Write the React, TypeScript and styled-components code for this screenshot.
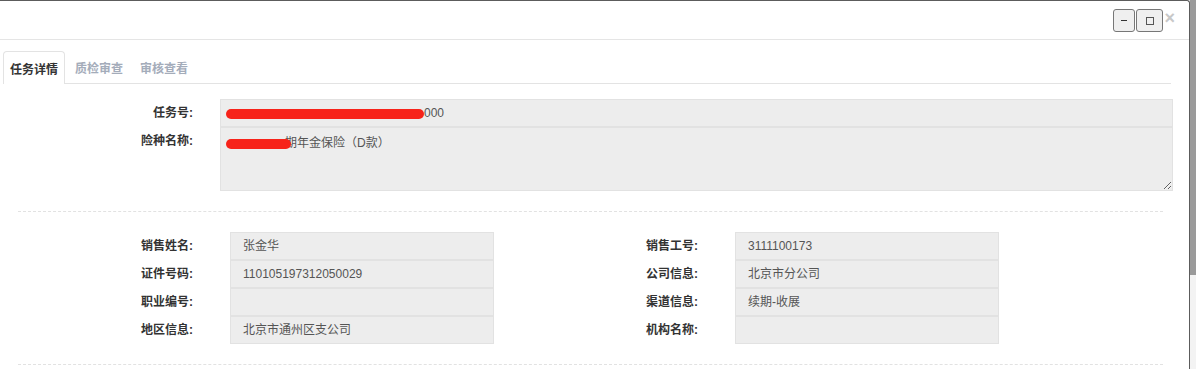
import React from 'react';
import styled, { createGlobalStyle } from 'styled-components';

const GlobalStyle = createGlobalStyle`
  html, body {
    margin: 0;
    padding: 0;
    background: #fff;
  }
  body {
    font-family: "Liberation Sans", "Noto Sans CJK SC", sans-serif;
    font-size: 12px;
    color: #333;
  }
`;

const Page = styled.div`
  display: flex;
  width: 1196px;
  height: 369px;
  overflow: hidden;
`;

const Dialog = styled.div`
  width: 1190px;
  height: 369px;
  background: #fff;
  border-top: 1px solid #5c5c5c;
  border-right: 1px solid #5c5c5c;
  border-top-right-radius: 3px;
  box-sizing: border-box;
  display: flex;
  flex-direction: column;
`;

const Backdrop = styled.div`
  flex: 1;
  background: linear-gradient(#9a9a9a 0, #9a9a9a 275px, #f3f3f3 275px);
`;

const TitleBar = styled.div`
  height: 39px;
  border-bottom: 1px solid #e5e5e5;
  display: flex;
  align-items: flex-start;
  justify-content: flex-end;
  padding: 8px 14px 0 0;
  box-sizing: border-box;
  flex-shrink: 0;
`;

const WinButton = styled.button<{ $wide?: boolean }>`
  width: ${({ $wide }) => ($wide ? '27px' : '22px')};
  height: 23px;
  margin: 0 1px 0 0;
  padding: 0;
  border: 1px solid #777;
  border-radius: 3px;
  background: #efefef;
  display: flex;
  align-items: center;
  justify-content: center;
`;

const MinGlyph = styled.span`
  width: 6px;
  height: 1px;
  background: #333;
`;

const MaxGlyph = styled.span`
  width: 8px;
  height: 8px;
  border: 1px solid #555;
  box-sizing: border-box;
`;

const CloseGlyph = styled.span`
  margin-left: 0;
  color: #c8c8c8;
  font-size: 18px;
  font-weight: 700;
  line-height: 18px;
`;

const TabBar = styled.div`
  display: flex;
  margin: 11px 18px 0 3px;
  border-bottom: 1px solid #e3e3e3;
  height: 32px;
`;

const Tab = styled.div<{ $active?: boolean }>`
  padding: 0 6px;
  margin-right: 3px;
  height: ${({ $active }) => ($active ? '33px' : '32px')};
  box-sizing: border-box;
  display: flex;
  align-items: center;
  font-weight: 700;
  font-size: 12px;
  color: ${({ $active }) => ($active ? '#333' : '#a4acba')};
  background: #fff;
  border: 1px solid ${({ $active }) => ($active ? '#e3e3e3' : 'transparent')};
  border-bottom: none;
  border-radius: 4px 4px 0 0;
`;

const Body = styled.div`
  padding: 15px 0 0 0;
`;

const TopForm = styled.div`
  display: grid;
  grid-template-columns: 220px 953px;
`;

const Label = styled.div<{ $pad: number }>`
  font-weight: 700;
  color: #333;
  text-align: right;
  padding-right: ${({ $pad }) => $pad}px;
  height: 28px;
  line-height: 28px;
`;

const Field = styled.div<{ $pad?: number }>`
  height: 28px;
  line-height: 26px;
  box-sizing: border-box;
  background: #ededed;
  border: 1px solid #e2e2e2;
  color: #555;
  padding-left: ${({ $pad }) => $pad ?? 12}px;
  white-space: nowrap;
  overflow: hidden;
`;

const TextArea = styled.div`
  height: 64px;
  box-sizing: border-box;
  background: #ededed;
  border: 1px solid #e2e2e2;
  color: #555;
  padding: 7px 5px;
  line-height: 16px;
  resize: vertical;
  overflow: hidden;
`;

const Redact = styled.span<{ $w: number; $overlap?: number }>`
  display: inline-block;
  position: relative;
  z-index: 1;
  width: ${({ $w }) => $w}px;
  height: 10px;
  margin-right: ${({ $overlap }) => -($overlap ?? 0)}px;
  border-radius: 5px;
  background: #f7231a;
  vertical-align: middle;
`;

const Divider = styled.div`
  margin: 20px 0 0 18px;
  width: 1145px;
  border-top: 1px dashed #e2e2e2;
`;

const InfoGrid = styled.div`
  display: grid;
  grid-template-columns: 230px 264px 241px 264px;
  margin-top: 20px;
`;

const rows: [string, string, string, string][] = [
  ['销售姓名:', '张金华', '销售工号:', '3111100173'],
  ['证件号码:', '110105197312050029', '公司信息:', '北京市分公司'],
  ['职业编号:', '', '渠道信息:', '续期-收展'],
  ['地区信息:', '北京市通州区支公司', '机构名称:', ''],
];

export default function App() {
  return (
    <>
      <GlobalStyle />
      <Page>
        <Dialog>
          <TitleBar>
            <WinButton>
              <MinGlyph />
            </WinButton>
            <WinButton $wide>
              <MaxGlyph />
            </WinButton>
            <CloseGlyph>×</CloseGlyph>
          </TitleBar>

          <TabBar>
            <Tab $active>任务详情</Tab>
            <Tab>质检审查</Tab>
            <Tab>审核查看</Tab>
          </TabBar>

          <Body>
            <TopForm>
              <Label $pad={27}>任务号:</Label>
              <Field $pad={5}>
                <Redact $w={198} />
                000
              </Field>
              <Label $pad={27}>险种名称:</Label>
              <TextArea>
                <Redact $w={65} $overlap={6} />
                期年金保险（D款）
              </TextArea>
            </TopForm>

            <Divider />

            <InfoGrid>
              {rows.map(([l1, v1, l2, v2]) => (
                <React.Fragment key={l1}>
                  <Label $pad={37}>{l1}</Label>
                  <Field>{v1}</Field>
                  <Label $pad={37}>{l2}</Label>
                  <Field>{v2}</Field>
                </React.Fragment>
              ))}
            </InfoGrid>

            <Divider />
          </Body>
        </Dialog>
        <Backdrop />
      </Page>
    </>
  );
}
